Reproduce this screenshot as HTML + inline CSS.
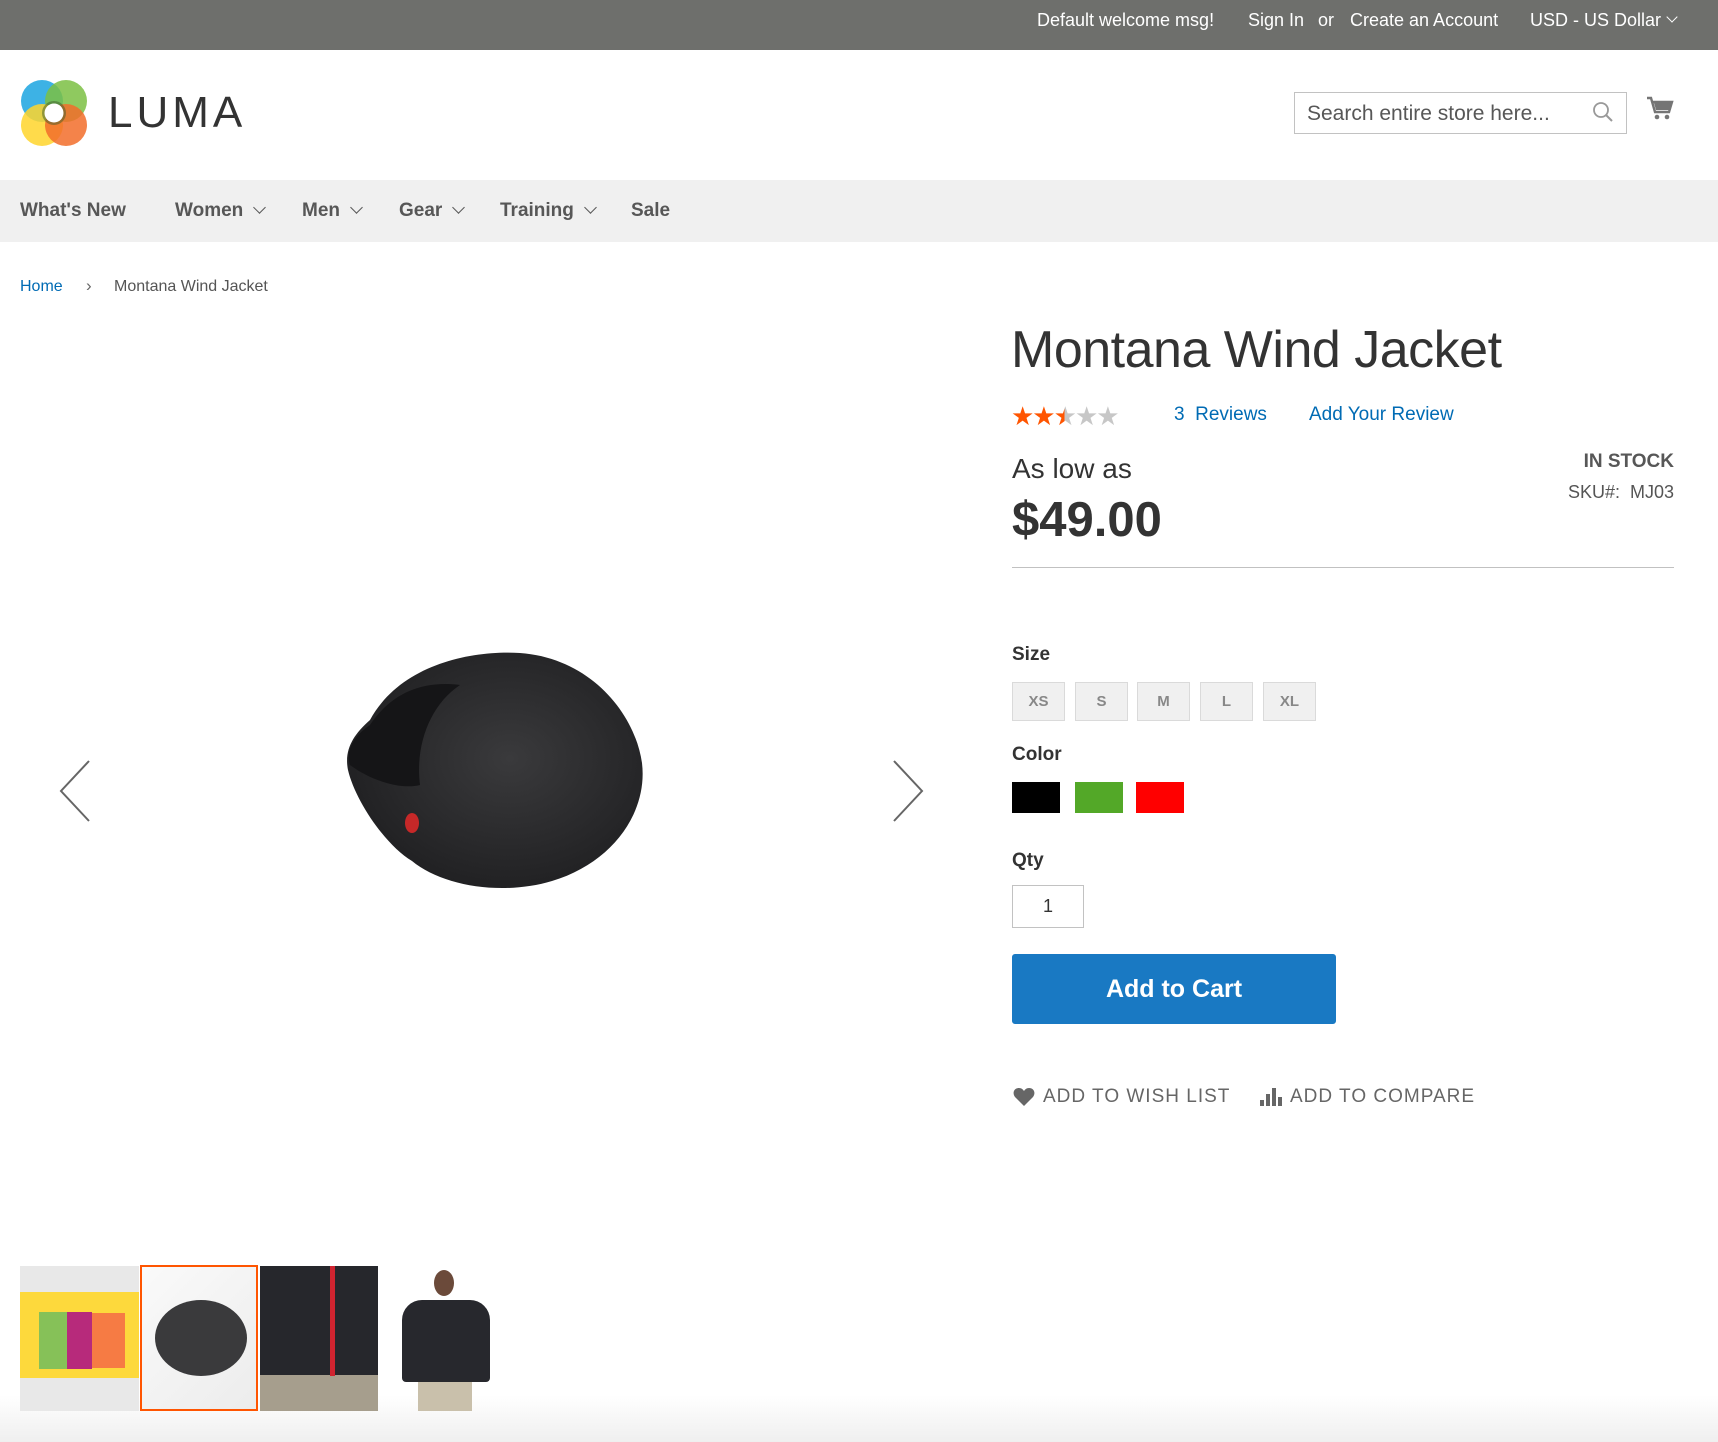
<!DOCTYPE html>
<html><head><meta charset="utf-8"><style>
*{margin:0;padding:0;box-sizing:border-box}
body{width:1718px;height:1442px;background:#fff;font-family:"Liberation Sans",sans-serif;color:#333;position:relative;overflow:hidden}
.a{position:absolute;white-space:nowrap}
.top{position:absolute;left:0;top:0;width:1718px;height:50px;background:#6e6f6c;color:#fff;font-size:18px}
.nav{position:absolute;left:0;top:180px;width:1718px;height:62px;background:#f0f0f0}
.nav span{position:absolute;top:20px;font-size:19px;font-weight:bold;color:#575757}
.chev{display:inline-block;width:9px;height:9px;border-right:1.5px solid #575757;border-bottom:1.5px solid #575757;transform:rotate(45deg);margin-left:12px;position:relative;top:-4px}
.sw{position:absolute;top:682px;width:53px;height:39px;background:#f0f0f0;border:1px solid #dadada;color:#888;font-size:15px;font-weight:bold;text-align:center;line-height:37px}
.col{position:absolute;top:782px;width:48px;height:31px}
.blue{color:#006bb4}
</style></head><body>
<div class="top">
<span class="a" style="left:1037px;top:10px">Default welcome msg!</span>
<span class="a" style="left:1248px;top:10px">Sign In</span>
<span class="a" style="left:1318px;top:10px">or</span>
<span class="a" style="left:1350px;top:10px">Create an Account</span>
<span class="a" style="left:1530px;top:10px">USD - US Dollar</span>
<span class="a" style="left:1668px;top:13px;width:8px;height:8px;border-right:1.5px solid #fff;border-bottom:1.5px solid #fff;transform:rotate(45deg)"></span>
</div>
<svg class="a" style="left:20px;top:79px" width="68" height="68" viewBox="0 0 68 68">
<circle cx="22" cy="22" r="21" fill="#1ba5e0" opacity=".85"/>
<circle cx="46" cy="22" r="21" fill="#7bc043" opacity=".85"/>
<circle cx="22" cy="46" r="21" fill="#ffd52c" opacity=".85"/>
<circle cx="46" cy="46" r="21" fill="#f26d2a" opacity=".85"/>
<circle cx="34" cy="34" r="12" fill="#3d5a2a" opacity=".5"/>
<circle cx="34" cy="34" r="9.5" fill="#fff"/>
</svg>
<div class="a" style="left:108px;top:88px;font-size:44px;letter-spacing:4px;color:#333">LUMA</div>
<div class="a" style="left:1294px;top:92px;width:333px;height:42px;border:1px solid #c2c2c2;font-size:21px;color:#575757;padding:9px 12px">Search entire store here...</div>
<svg class="a" style="left:1592px;top:101px" width="22" height="22" viewBox="0 0 22 22"><circle cx="9" cy="9" r="7" fill="none" stroke="#999" stroke-width="1.8"/><path d="M14 14l6 6" stroke="#999" stroke-width="2"/></svg>
<svg class="a" style="left:1646px;top:96px" width="28" height="26" viewBox="0 0 28 26"><path d="M1 2h4l4 14h14l3-10H7" fill="none" stroke="#757575" stroke-width="2.4"/><path d="M8 7h17l-2 7H10z" fill="#757575"/><circle cx="11" cy="21" r="2.3" fill="#757575"/><circle cx="21" cy="21" r="2.3" fill="#757575"/></svg>
<div class="nav">
<span style="left:20px">What's New</span>
<span style="left:175px">Women<i class="chev"></i></span>
<span style="left:302px">Men<i class="chev"></i></span>
<span style="left:399px">Gear<i class="chev"></i></span>
<span style="left:500px">Training<i class="chev"></i></span>
<span style="left:631px">Sale</span>
</div>
<span class="a blue" style="left:20px;top:278px;font-size:16px">Home</span>
<span class="a" style="left:86px;top:276px;font-size:17px;color:#666">›</span>
<span class="a" style="left:114px;top:278px;font-size:16px;color:#555">Montana Wind Jacket</span>

<svg class="a" style="left:55px;top:758px" width="40" height="66"><path d="M34 3L6 33l28 30" fill="none" stroke="#666" stroke-width="2"/></svg>
<svg class="a" style="left:888px;top:758px" width="40" height="66"><path d="M6 3l28 30L6 63" fill="none" stroke="#666" stroke-width="2"/></svg>
<svg class="a" style="left:340px;top:645px" width="310" height="245" viewBox="0 0 310 245">
<defs><radialGradient id="g" cx=".55" cy=".45" r=".6"><stop offset="0" stop-color="#3a3a3c"/><stop offset="1" stop-color="#1f1f21"/></radialGradient></defs>
<path d="M30 75C60 20 130 5 180 8c70 5 115 60 122 110 6 50-30 100-90 118-50 15-110 5-140-20C45 200 15 155 8 125c-4-20 5-35 22-50z" fill="url(#g)"/>
<path d="M30 80c20-30 50-45 90-40-30 20-45 60-40 100-20 5-50-5-70-20-5-15 5-30 20-40z" fill="#151517"/>
<ellipse cx="72" cy="178" rx="7" ry="10" fill="#c62828"/>
</svg>

<div class="a" style="left:1011px;top:320px;font-size:52px;color:#333;letter-spacing:-0.5px">Montana Wind Jacket</div>
<div class="a" style="left:1011px;top:401px;font-size:26px;letter-spacing:-2px;color:#ff5501">★★<span style="background:linear-gradient(90deg,#ff5501 50%,#c7c7c7 50%);-webkit-background-clip:text;color:transparent">★</span><span style="color:#c7c7c7">★★</span></div>
<span class="a blue" style="left:1174px;top:404px;font-size:19px">3&nbsp; Reviews</span>
<span class="a blue" style="left:1309px;top:404px;font-size:19px">Add Your Review</span>
<span class="a" style="left:1012px;top:453px;font-size:28px;color:#333">As low as</span>
<span class="a" style="left:1012px;top:492px;font-size:49px;font-weight:bold;color:#333">$49.00</span>
<span class="a" style="right:44px;top:451px;font-size:19px;font-weight:bold;color:#575757">IN STOCK</span>
<span class="a" style="right:44px;top:482px;font-size:18px;color:#555">SKU#:&nbsp; MJ03</span>
<div class="a" style="left:1012px;top:567px;width:662px;height:1px;background:#c1c1c1"></div>
<span class="a" style="left:1012px;top:644px;font-size:19px;font-weight:bold">Size</span>
<div class="sw" style="left:1012px">XS</div><div class="sw" style="left:1075px">S</div><div class="sw" style="left:1137px">M</div><div class="sw" style="left:1200px">L</div><div class="sw" style="left:1263px">XL</div>
<span class="a" style="left:1012px;top:744px;font-size:19px;font-weight:bold">Color</span>
<div class="col" style="left:1012px;background:#000"></div>
<div class="col" style="left:1075px;background:#53a828"></div>
<div class="col" style="left:1136px;background:#ff0000"></div>
<span class="a" style="left:1012px;top:850px;font-size:19px;font-weight:bold">Qty</span>
<div class="a" style="left:1012px;top:885px;width:72px;height:43px;border:1px solid #c2c2c2;text-align:center;line-height:41px;font-size:18px">1</div>
<div class="a" style="left:1012px;top:954px;width:324px;height:70px;background:#1979c3;border:1px solid #1979c3;border-radius:3px;color:#fff;font-size:25px;font-weight:bold;text-align:center;line-height:68px">Add to Cart</div>
<svg class="a" style="left:1013px;top:1087px" width="22" height="20" viewBox="0 0 22 20"><path d="M11 19L2 10C-1 6 1 1 6 1c2.5 0 4 1.5 5 3 1-1.5 2.5-3 5-3 5 0 7 5 4 9z" fill="#666"/></svg>
<span class="a" style="left:1043px;top:1086px;font-size:19px;color:#666;letter-spacing:1px">ADD TO WISH LIST</span>
<svg class="a" style="left:1260px;top:1088px" width="22" height="18"><rect x="0" y="12" width="4" height="6" fill="#666"/><rect x="6" y="6" width="4" height="12" fill="#666"/><rect x="12" y="0" width="4" height="18" fill="#666"/><rect x="18" y="9" width="4" height="9" fill="#666"/></svg>
<span class="a" style="left:1290px;top:1086px;font-size:19px;color:#666;letter-spacing:1px">ADD TO COMPARE</span>

<div class="a" style="left:0;top:1395px;width:1718px;height:47px;background:linear-gradient(#fff,#efefef)"></div>
<div class="a" style="left:20px;top:1266px;width:119px;height:145px;background:#e8e8e8"></div>
<div class="a" style="left:20px;top:1292px;width:119px;height:86px;background:#fdd93c"></div>
<div class="a" style="left:39px;top:1312px;width:30px;height:57px;background:#86c158"></div>
<div class="a" style="left:67px;top:1312px;width:25px;height:57px;background:#b72a7b"></div>
<div class="a" style="left:92px;top:1313px;width:33px;height:55px;background:#f67b44"></div>
<div class="a" style="left:140px;top:1265px;width:118px;height:146px;border:2px solid #ff5501;background:linear-gradient(135deg,#fafafa,#ececec)"></div>
<div class="a" style="left:155px;top:1300px;width:92px;height:76px;border-radius:50%;background:#3a3a3c"></div>
<div class="a" style="left:260px;top:1266px;width:118px;height:145px;background:#26272c"></div>
<div class="a" style="left:260px;top:1375px;width:118px;height:36px;background:#a69e8d"></div>
<div class="a" style="left:330px;top:1266px;width:5px;height:110px;background:#d02430"></div>
<div class="a" style="left:402px;top:1300px;width:88px;height:82px;border-radius:20px 20px 4px 4px;background:#27282d"></div>
<div class="a" style="left:434px;top:1270px;width:20px;height:26px;border-radius:50%;background:#6b4a3a"></div>
<div class="a" style="left:418px;top:1382px;width:54px;height:29px;background:#c9c0ab"></div>
</body></html>
